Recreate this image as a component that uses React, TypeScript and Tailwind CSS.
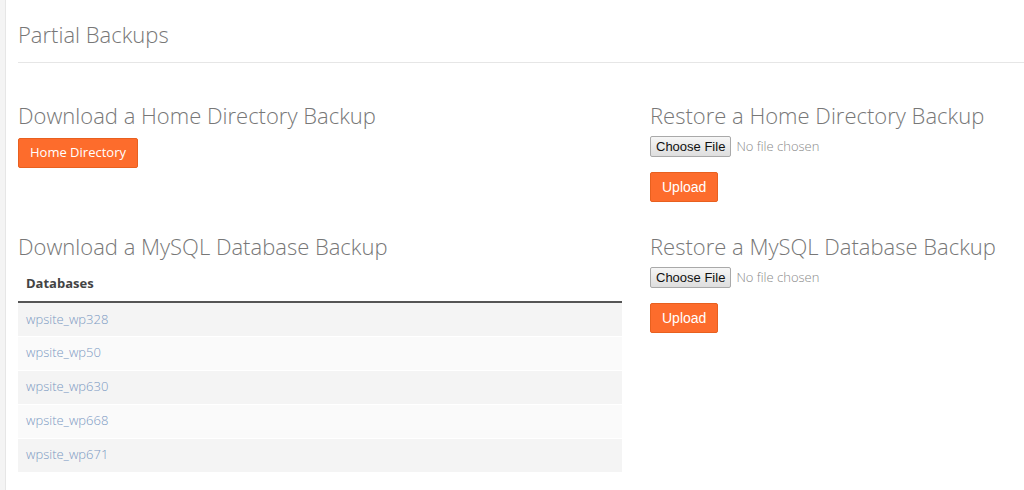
const databases = ['wpsite_wp328', 'wpsite_wp50', 'wpsite_wp630', 'wpsite_wp668', 'wpsite_wp671'];

function FileUpload() {
  return (
    <div>
      <div className="mt-[9px] flex items-center">
        <button className="h-[21px] rounded-[2px] border border-[#a9a9a9] bg-gradient-to-b from-[#f6f6f6] to-[#dedede] px-[5px] font-['Liberation_Sans',Arial,sans-serif] text-[13px] leading-none text-[#111]">
          Choose File
        </button>
        <span className="ml-[5px] font-['Open_Sans',sans-serif] text-[13px] font-light text-[#8a8a8a]">No file chosen</span>
      </div>
      <button className="mt-[15px] h-[30px] rounded-[2px] border border-[#e8601f] bg-[#fd6c2c] px-[11px] font-['Liberation_Sans',Arial,sans-serif] text-[14px] text-white">
        Upload
      </button>
    </div>
  );
}

export default function App() {
  return (
    <div className="flex min-h-[490px] bg-white font-['Open_Sans',sans-serif]">
      <div className="w-[6px] shrink-0 border-r border-[#e6e6e6] bg-[#f4f4f4]" />
      <div className="flex-1 pl-[12px]">
        <h1 className="pt-[22px] text-[22px] font-light leading-[24px] text-[#777]">Partial Backups</h1>
        <hr className="mt-[16px] border-t border-[#e6e6e6]" />

        <div className="mt-[40px] grid grid-cols-[604px_1fr] gap-x-[28px] gap-y-[32px]">
          <section>
            <h2 className="text-[22px] font-light leading-[24px] text-[#777]">Download a Home Directory Backup</h2>
            <button className="mt-[11px] h-[30px] rounded-[2px] border border-[#e8601f] bg-[#fd6c2c] px-[11px] text-[13px] text-white">
              Home Directory
            </button>
          </section>

          <section>
            <h2 className="text-[22px] font-light leading-[24px] text-[#777]">Restore a Home Directory Backup</h2>
            <FileUpload />
          </section>

          <section>
            <h2 className="text-[22px] font-light leading-[24px] text-[#777]">Download a MySQL Database Backup</h2>
            <table className="mt-[7px] w-full border-collapse text-left">
              <thead>
                <tr className="border-b-2 border-[#555]">
                  <th className="px-[8px] py-[8px] text-[13px] font-bold leading-[20px] text-[#444]">Databases</th>
                </tr>
              </thead>
              <tbody>
                {databases.map((db, i) => (
                  <tr key={db} className={i % 2 === 0 ? 'bg-[#f4f4f4]' : 'bg-[#fafafa]'}>
                    <td className="h-[34px] border-b border-white px-[8px] text-[13px] font-light text-[#7b99c2]">{db}</td>
                  </tr>
                ))}
              </tbody>
            </table>
          </section>

          <section>
            <h2 className="text-[22px] font-light leading-[24px] text-[#777]">Restore a MySQL Database Backup</h2>
            <FileUpload />
          </section>
        </div>
      </div>
    </div>
  );
}
